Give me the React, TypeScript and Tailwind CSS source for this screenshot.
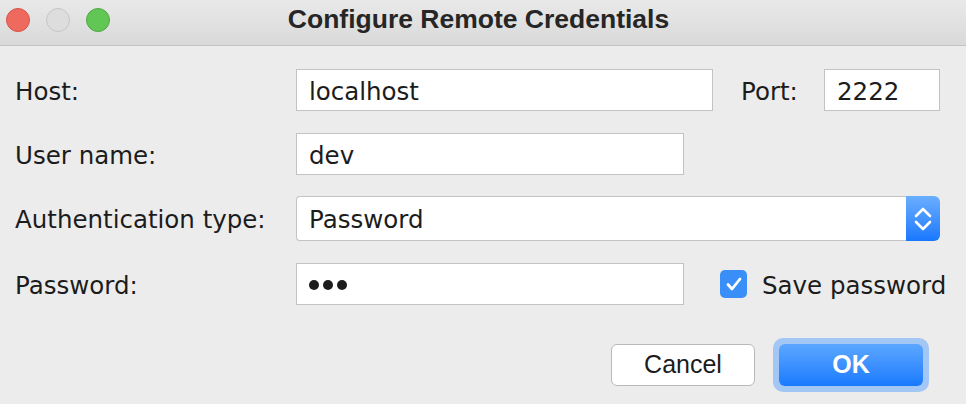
import { ReactNode } from 'react';

const body = "font-['DejaVu_Sans',sans-serif] text-[24.5px] text-[#1c1c1c]";
const helv = "font-['Liberation_Sans',Arial,sans-serif]";

function Field({ w, children }: { w: string; children?: ReactNode }) {
  return (
    <div className={`${w} h-[42px] bg-white border border-[#c3c3c3] flex items-center pl-[12px] pt-[4px] ${body}`}>
      {children}
    </div>
  );
}

function Label({ children }: { children: ReactNode }) {
  return <div className={`w-[281px] shrink-0 pt-[4px] ${body}`}>{children}</div>;
}

export default function App() {
  return (
    <div className="w-[966px] h-[404px] bg-[#ececec] overflow-hidden flex flex-col">
      {/* Title bar */}
      <div className="relative h-[46px] shrink-0 bg-gradient-to-b from-[#e9e9e9] to-[#d9d9d9] border-b border-[#c4c4c4] flex items-center justify-center">
        <div className="absolute left-[6px] top-[8px] flex gap-[16px]">
          <span className="w-[24px] h-[24px] rounded-full bg-[#ee6a5f] border border-[#d6534a]" />
          <span className="w-[24px] h-[24px] rounded-full bg-[#dddddd] border border-[#c6c6c6]" />
          <span className="w-[24px] h-[24px] rounded-full bg-[#62c655] border border-[#51a845]" />
        </div>
        <div className={`${helv} font-bold text-[26.5px] text-[#262626] pr-[9px] pb-[6px]`}>
          Configure Remote Credentials
        </div>
      </div>

      <div className="flex flex-col pl-[15px] pt-[23px]">
        {/* Host / Port */}
        <div className="flex items-center h-[42px]">
          <Label>Host:</Label>
          <Field w="w-[417px]">localhost</Field>
          <div className={`ml-[28px] w-[83px] pt-[4px] ${body}`}>Port:</div>
          <Field w="w-[116px]">2222</Field>
        </div>

        {/* User name */}
        <div className="flex items-center h-[42px] mt-[22px]">
          <Label>User name:</Label>
          <Field w="w-[388px]">dev</Field>
        </div>

        {/* Auth type */}
        <div className="flex items-center h-[45px] mt-[21px]">
          <Label>Authentication type:</Label>
          <div className="w-[644px] h-[45px] flex">
            <div className={`flex-1 bg-white border border-r-0 border-[#c3c3c3] rounded-l-[4px] flex items-center pl-[12px] pt-[4px] ${body}`}>
              Password
            </div>
            <div className="w-[34px] h-[45px] rounded-r-[6px] bg-gradient-to-b from-[#6aaeff] to-[#1677fe] flex items-center justify-center">
              <svg width="18" height="26" viewBox="0 0 18 26" fill="none" stroke="white" strokeWidth="2.6" strokeLinecap="round" strokeLinejoin="round">
                <path d="M2 10 L9 3 L16 10" />
                <path d="M2 16 L9 23 L16 16" />
              </svg>
            </div>
          </div>
        </div>

        {/* Password */}
        <div className="flex items-center h-[42px] mt-[22px]">
          <Label>Password:</Label>
          <Field w="w-[388px]">
            <div className="flex gap-[4px] -mt-[3px]">
              <span className="w-[10px] h-[10px] rounded-full bg-[#1c1c1c]" />
              <span className="w-[10px] h-[10px] rounded-full bg-[#1c1c1c]" />
              <span className="w-[10px] h-[10px] rounded-full bg-[#1c1c1c]" />
            </div>
          </Field>
          <div className="ml-[36px] w-[27px] h-[28px] rounded-[5px] bg-[#3a8ef7] flex items-center justify-center">
            <svg width="18" height="16" viewBox="0 0 18 16" fill="none" stroke="white" strokeWidth="2.8" strokeLinecap="round" strokeLinejoin="round">
              <path d="M3 8.5 L7 13 L15 3" />
            </svg>
          </div>
          <div className={`ml-[15px] pt-[4px] ${body}`}>Save password</div>
        </div>

        {/* Buttons */}
        <div className="flex items-center justify-end pr-[37px] mt-[33px]">
          <button className={`w-[144px] h-[42px] bg-white border border-[#b9b9b9] rounded-[6px] ${helv} text-[25px] text-[#1c1c1c] flex items-center justify-center`}>
            Cancel
          </button>
          <div className="ml-[18px] p-[6px] rounded-[10px] bg-[#a3c7f4]">
            <button className={`w-[144px] h-[42px] rounded-[6px] bg-gradient-to-b from-[#5ba6ff] to-[#167afe] ${helv} font-bold text-[25px] text-white flex items-center justify-center`}>
              OK
            </button>
          </div>
        </div>
      </div>
    </div>
  );
}
